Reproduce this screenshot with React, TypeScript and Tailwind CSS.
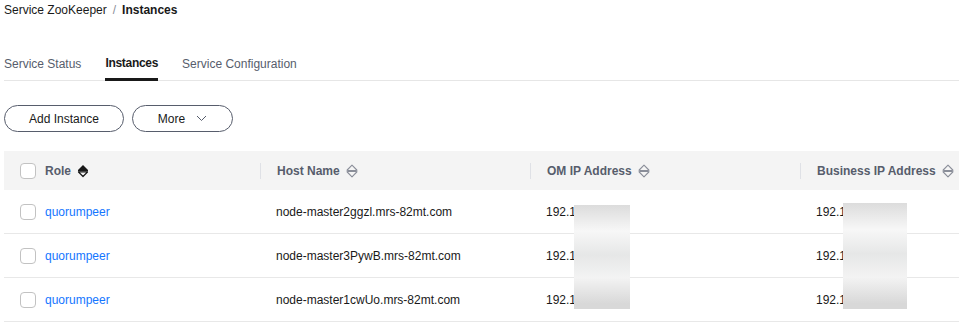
import React from 'react';

type Row = { role: string; host: string };

const rows: Row[] = [
  { role: 'quorumpeer', host: 'node-master2ggzl.mrs-82mt.com' },
  { role: 'quorumpeer', host: 'node-master3PywB.mrs-82mt.com' },
  { role: 'quorumpeer', host: 'node-master1cwUo.mrs-82mt.com' },
];

// sort indicator, "active" fills the upper half
function SortIcon({ active = false }: { active?: boolean }) {
  return (
    <svg width="12" height="14" viewBox="0 0 12 14" className="shrink-0">
      {active ? (
        <>
          <path d="M6 1 L11 6 H1 Z" fill="#191919" />
          <path d="M1.5 8 H10.5 L6 12.5 Z" fill="none" stroke="#191919" strokeWidth="1.2" strokeLinejoin="round" />
          <rect x="1" y="6" width="10" height="1.6" fill="#191919" />
        </>
      ) : (
        <>
          <path d="M6 1.2 L10.8 6 V8 L6 12.8 L1.2 8 V6 Z" fill="none" stroke="#8a8e99" strokeWidth="1.1" strokeLinejoin="round" />
          <rect x="1.5" y="6" width="9" height="2" fill="#8a8e99" />
        </>
      )}
    </svg>
  );
}

function Checkbox() {
  return <span className="inline-block w-4 h-4 rounded-[4px] border border-[#c2c2c2] bg-white shrink-0" />;
}

function HeaderCell({ label, divider = true, active = false, width }: { label: string; divider?: boolean; active?: boolean; width: string }) {
  return (
    <div className={`flex items-center shrink-0 ${width}`}>
      {divider && <span className="w-px h-4 bg-[#dfe1e6]" />}
      <span className="pl-4 font-bold text-[#575d6c]">{label}</span>
      <span className="ml-[6px]">
        <SortIcon active={active} />
      </span>
    </div>
  );
}

const blurBg = 'bg-[linear-gradient(180deg,#dcdcdc_0%,#f7f7f7_25%,#e6e7e7_48%,#f3f3f3_70%,#d8d8d8_95%)]';

export default function App() {
  return (
    <div className="w-[959px] h-[325px] overflow-hidden bg-white text-[12px] text-[#191919] font-['Liberation_Sans',Arial,sans-serif]">
      {/* breadcrumb */}
      <div className="pl-1 h-[19px] flex items-center leading-none">
        <span>Service ZooKeeper</span>
        <span className="mx-[6px] text-[#8a8e99]">/</span>
        <span className="font-bold">Instances</span>
      </div>

      {/* tabs */}
      <div className="mt-[33px] ml-1 flex border-b border-[#e6e6e6] h-[29px] items-start">
        <span className="text-[#575d6c] pt-[3px]">Service Status</span>
        <span className="ml-6 pt-[3px] font-bold h-[29px] border-b-[3px] border-[#191919] leading-[16px] tracking-[-0.3px]">Instances</span>
        <span className="ml-6 text-[#575d6c] pt-[3px]">Service Configuration</span>
      </div>

      {/* toolbar */}
      <div className="mt-[24px] ml-1 flex gap-2">
        <button className="w-[120px] h-[27px] rounded-full border border-[#575d6c] bg-white text-[#191919]">Add Instance</button>
        <button className="w-[101px] h-[27px] rounded-full border border-[#575d6c] bg-white text-[#191919] flex items-center justify-center gap-[11px]">
          More
          <svg width="11" height="7" viewBox="0 0 11 7">
            <path d="M1 1 L5.5 5.5 L10 1" fill="none" stroke="#575d6c" strokeWidth="1" />
          </svg>
        </button>
      </div>

      {/* table */}
      <div className="relative mt-[19px] ml-1 w-[1100px]">
        <div className="h-[39px] bg-[#f4f4f4] flex items-center">
          <div className="w-[256px] flex items-center pl-4 shrink-0">
            <Checkbox />
            <span className="ml-[9px] font-bold text-[#575d6c]">Role</span>
            <span className="ml-[6px]">
              <SortIcon active />
            </span>
          </div>
          <HeaderCell label="Host Name" width="w-[270px]" />
          <HeaderCell label="OM IP Address" width="w-[270px]" />
          <HeaderCell label="Business IP Address" width="w-[270px]" />
        </div>
        {rows.map((r, i) => (
          <div key={i} className="h-[44px] flex items-center border-b border-[#e8e8e8]">
            <div className="w-[256px] flex items-center pl-4 shrink-0">
              <Checkbox />
              <span className="ml-[9px] text-[#1476ff]">{r.role}</span>
            </div>
            <div className="w-[270px] pl-4 shrink-0">{r.host}</div>
            <div className="w-[270px] pl-4 shrink-0">192.1</div>
            <div className="w-[270px] pl-4 shrink-0">192.1</div>
          </div>
        ))}
        <div className={`absolute left-[570px] top-[54px] w-[56px] h-[104px] ${blurBg}`} />
        <div className={`absolute left-[839px] top-[52px] w-[64px] h-[106px] ${blurBg}`} />
      </div>
    </div>
  );
}
